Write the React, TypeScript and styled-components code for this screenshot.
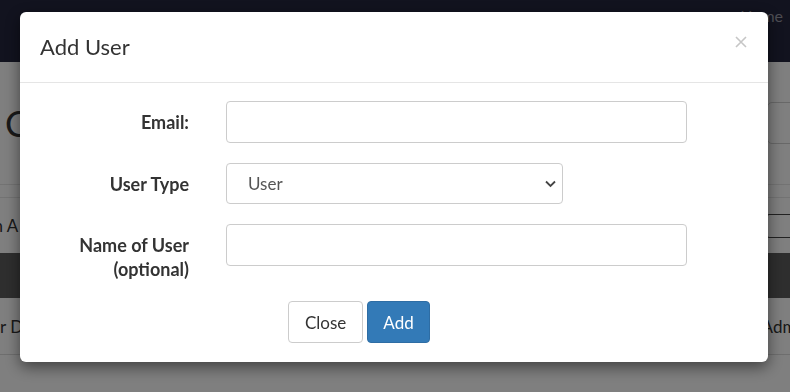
import React from "react";
import styled, { createGlobalStyle } from "styled-components";

const Global = createGlobalStyle`
  html, body { margin: 0; padding: 0; }
  body {
    width: 790px;
    height: 392px;
    overflow: hidden;
    background: #ffffff;
    font-family: Lato, "Open Sans", "Liberation Sans", sans-serif;
    color: #333333;
  }
  * { box-sizing: border-box; }
`;

/* ---------- page behind the modal ---------- */
const Page = styled.div`
  width: 790px;
  height: 392px;
  overflow: hidden;
  display: flex;
  flex-direction: column;
`;

const NavBar = styled.div`
  height: 62px;
  flex: none;
  background: #24263e;
  display: flex;
  justify-content: flex-end;
  align-items: flex-start;
  padding: 6px 7px 0 0;
`;

const NavLink = styled.span`
  font-size: 16px;
  color: #9a9aa6;
`;

const HeadRow = styled.div`
  height: 123px;
  flex: none;
  display: flex;
  align-items: center;
  justify-content: space-between;
  padding: 0 7px 0 5px;
  border-bottom: 1px solid #e6e6e6;
`;

const Heading = styled.h1`
  margin: 0;
  font-size: 36px;
  font-weight: 400;
  color: #333;
`;

const PageSelect = styled.div<{ $h: number; $dark?: boolean }>`
  width: 60px;
  height: ${(p) => p.$h}px;
  margin-right: -44px;
  border: 1px solid ${(p) => (p.$dark ? "#444" : "#d0d0d0")};
  border-radius: ${(p) => (p.$dark ? 2 : 5)}px;
  display: flex;
  align-items: center;
  justify-content: flex-end;
  padding-right: 4px;
  background: #fff;
`;

const FilterBar = styled.div`
  height: 56px;
  flex: none;
  margin-top: 12px;
  border-top: 1px solid #e6e6e6;
  display: flex;
  align-items: center;
  justify-content: space-between;
  padding: 0 7px 0 0;
`;

const FilterText = styled.span`
  font-size: 17px;
  margin-left: -11px;
  color: #333;
`;

const TableHead = styled.div`
  height: 45px;
  flex: none;
  background: #5d5d5d;
`;

const TableRow = styled.div`
  height: 57px;
  flex: none;
  border-bottom: 1px solid #dcdcdc;
  display: flex;
  align-items: center;
  justify-content: space-between;
  font-size: 17px;
`;

const RowText = styled.span<{ $left?: boolean }>`
  ${(p) => (p.$left ? "margin-left: 0;" : "margin-right: -20px;")}
  color: #333;
`;

/* ---------- modal ---------- */
const Overlay = styled.div`
  position: fixed;
  inset: 0;
  background: rgba(0, 0, 0, 0.5);
  display: flex;
  align-items: flex-start;
  padding: 12px 0 0 20px;
`;

const Dialog = styled.div`
  width: 748px;
  background: #fff;
  border-radius: 6px;
  box-shadow: 0 5px 15px rgba(0, 0, 0, 0.5);
`;

const Header = styled.div`
  height: 71px;
  border-bottom: 1px solid #e5e5e5;
  display: flex;
  align-items: center;
  justify-content: space-between;
  padding: 0 21px 0 20px;
`;

const Title = styled.h4`
  margin: 0;
  font-size: 22px;
  font-weight: 400;
  color: #333;
  line-height: 1.1;
`;

const CloseX = styled.button`
  border: none;
  background: none;
  padding: 0;
  width: 12px;
  height: 12px;
  margin-top: -10px;
  display: flex;
  cursor: pointer;
`;

const Body = styled.div`
  padding: 18px 0 19px 0;
`;

const Form = styled.div`
  display: grid;
  grid-template-columns: 169px 1fr;
  column-gap: 37px;
  row-gap: 20px;
`;

const Label = styled.label`
  text-align: right;
  font-weight: 700;
  font-size: 18px;
  line-height: 24px;
  padding-top: 9px;
  color: #333;
`;

const Input = styled.input<{ $w: number }>`
  width: ${(p) => p.$w}px;
  height: 42px;
  border: 1px solid #cccccc;
  border-radius: 4px;
  padding: 6px 12px;
  font-family: inherit;
  font-size: 17px;
  color: #555;
  outline: none;
`;

const SelectBox = styled.div<{ $w: number }>`
  position: relative;
  width: ${(p) => p.$w}px;
  height: 41px;
`;

const Select = styled.select`
  appearance: none;
  width: 100%;
  height: 100%;
  border: 1px solid #cccccc;
  border-radius: 4px;
  padding: 0 12px 0 21px;
  font-family: inherit;
  font-size: 17px;
  color: #555;
  background: #fff;
  outline: none;
`;

const Chevron = styled.svg`
  position: absolute;
  right: 7px;
  top: 17px;
  pointer-events: none;
`;

const Actions = styled.div`
  display: flex;
  gap: 4px;
  padding-left: 268px;
  margin-top: 20px;
`;

const Button = styled.button<{ $primary?: boolean }>`
  height: 42px;
  padding: 0 ${(p) => (p.$primary ? 15 : 16)}px;
  font-family: inherit;
  font-size: 17px;
  border-radius: 4px;
  border: 1px solid ${(p) => (p.$primary ? "#2e6da4" : "#cccccc")};
  background: ${(p) => (p.$primary ? "#337ab7" : "#ffffff")};
  color: ${(p) => (p.$primary ? "#ffffff" : "#333333")};
  cursor: pointer;
`;

const SmallChevron = () => (
  <svg width="11" height="8" viewBox="0 0 11 8">
    <path d="M1 1.5 L5.5 6 L10 1.5" fill="none" stroke="#333" strokeWidth="2" />
  </svg>
);

export default function App() {
  return (
    <>
      <Global />
      <Page>
        <NavBar>
          <NavLink>Home</NavLink>
        </NavBar>
        <HeadRow>
          <Heading>C</Heading>
          <PageSelect $h={42}>
            <SmallChevron />
          </PageSelect>
        </HeadRow>
        <FilterBar>
          <FilterText>m A</FilterText>
          <PageSelect $h={24} $dark>
            <SmallChevron />
          </PageSelect>
        </FilterBar>
        <TableHead />
        <TableRow>
          <RowText $left>r D</RowText>
          <RowText>Admin</RowText>
        </TableRow>
      </Page>

      <Overlay>
        <Dialog>
          <Header>
            <Title>Add User</Title>
            <CloseX aria-label="Close">
              <svg width="12" height="12" viewBox="0 0 12 12">
                <path d="M1 1 L11 11 M11 1 L1 11" stroke="#c6c6c6" strokeWidth="1.6" />
              </svg>
            </CloseX>
          </Header>
          <Body>
            <Form>
              <Label>Email:</Label>
              <div>
                <Input $w={461} type="email" />
              </div>
              <Label>User Type</Label>
              <SelectBox $w={337}>
                <Select defaultValue="User">
                  <option>User</option>
                  <option>Admin</option>
                </Select>
                <Chevron width="11" height="8" viewBox="0 0 11 8">
                  <path d="M1 1.5 L5.5 6 L10 1.5" fill="none" stroke="#444" strokeWidth="1.8" />
                </Chevron>
              </SelectBox>
              <Label>
                Name of User
                <br />
                (optional)
              </Label>
              <div>
                <Input $w={461} type="text" />
              </div>
            </Form>
            <Actions>
              <Button>Close</Button>
              <Button $primary>Add</Button>
            </Actions>
          </Body>
        </Dialog>
      </Overlay>
    </>
  );
}
